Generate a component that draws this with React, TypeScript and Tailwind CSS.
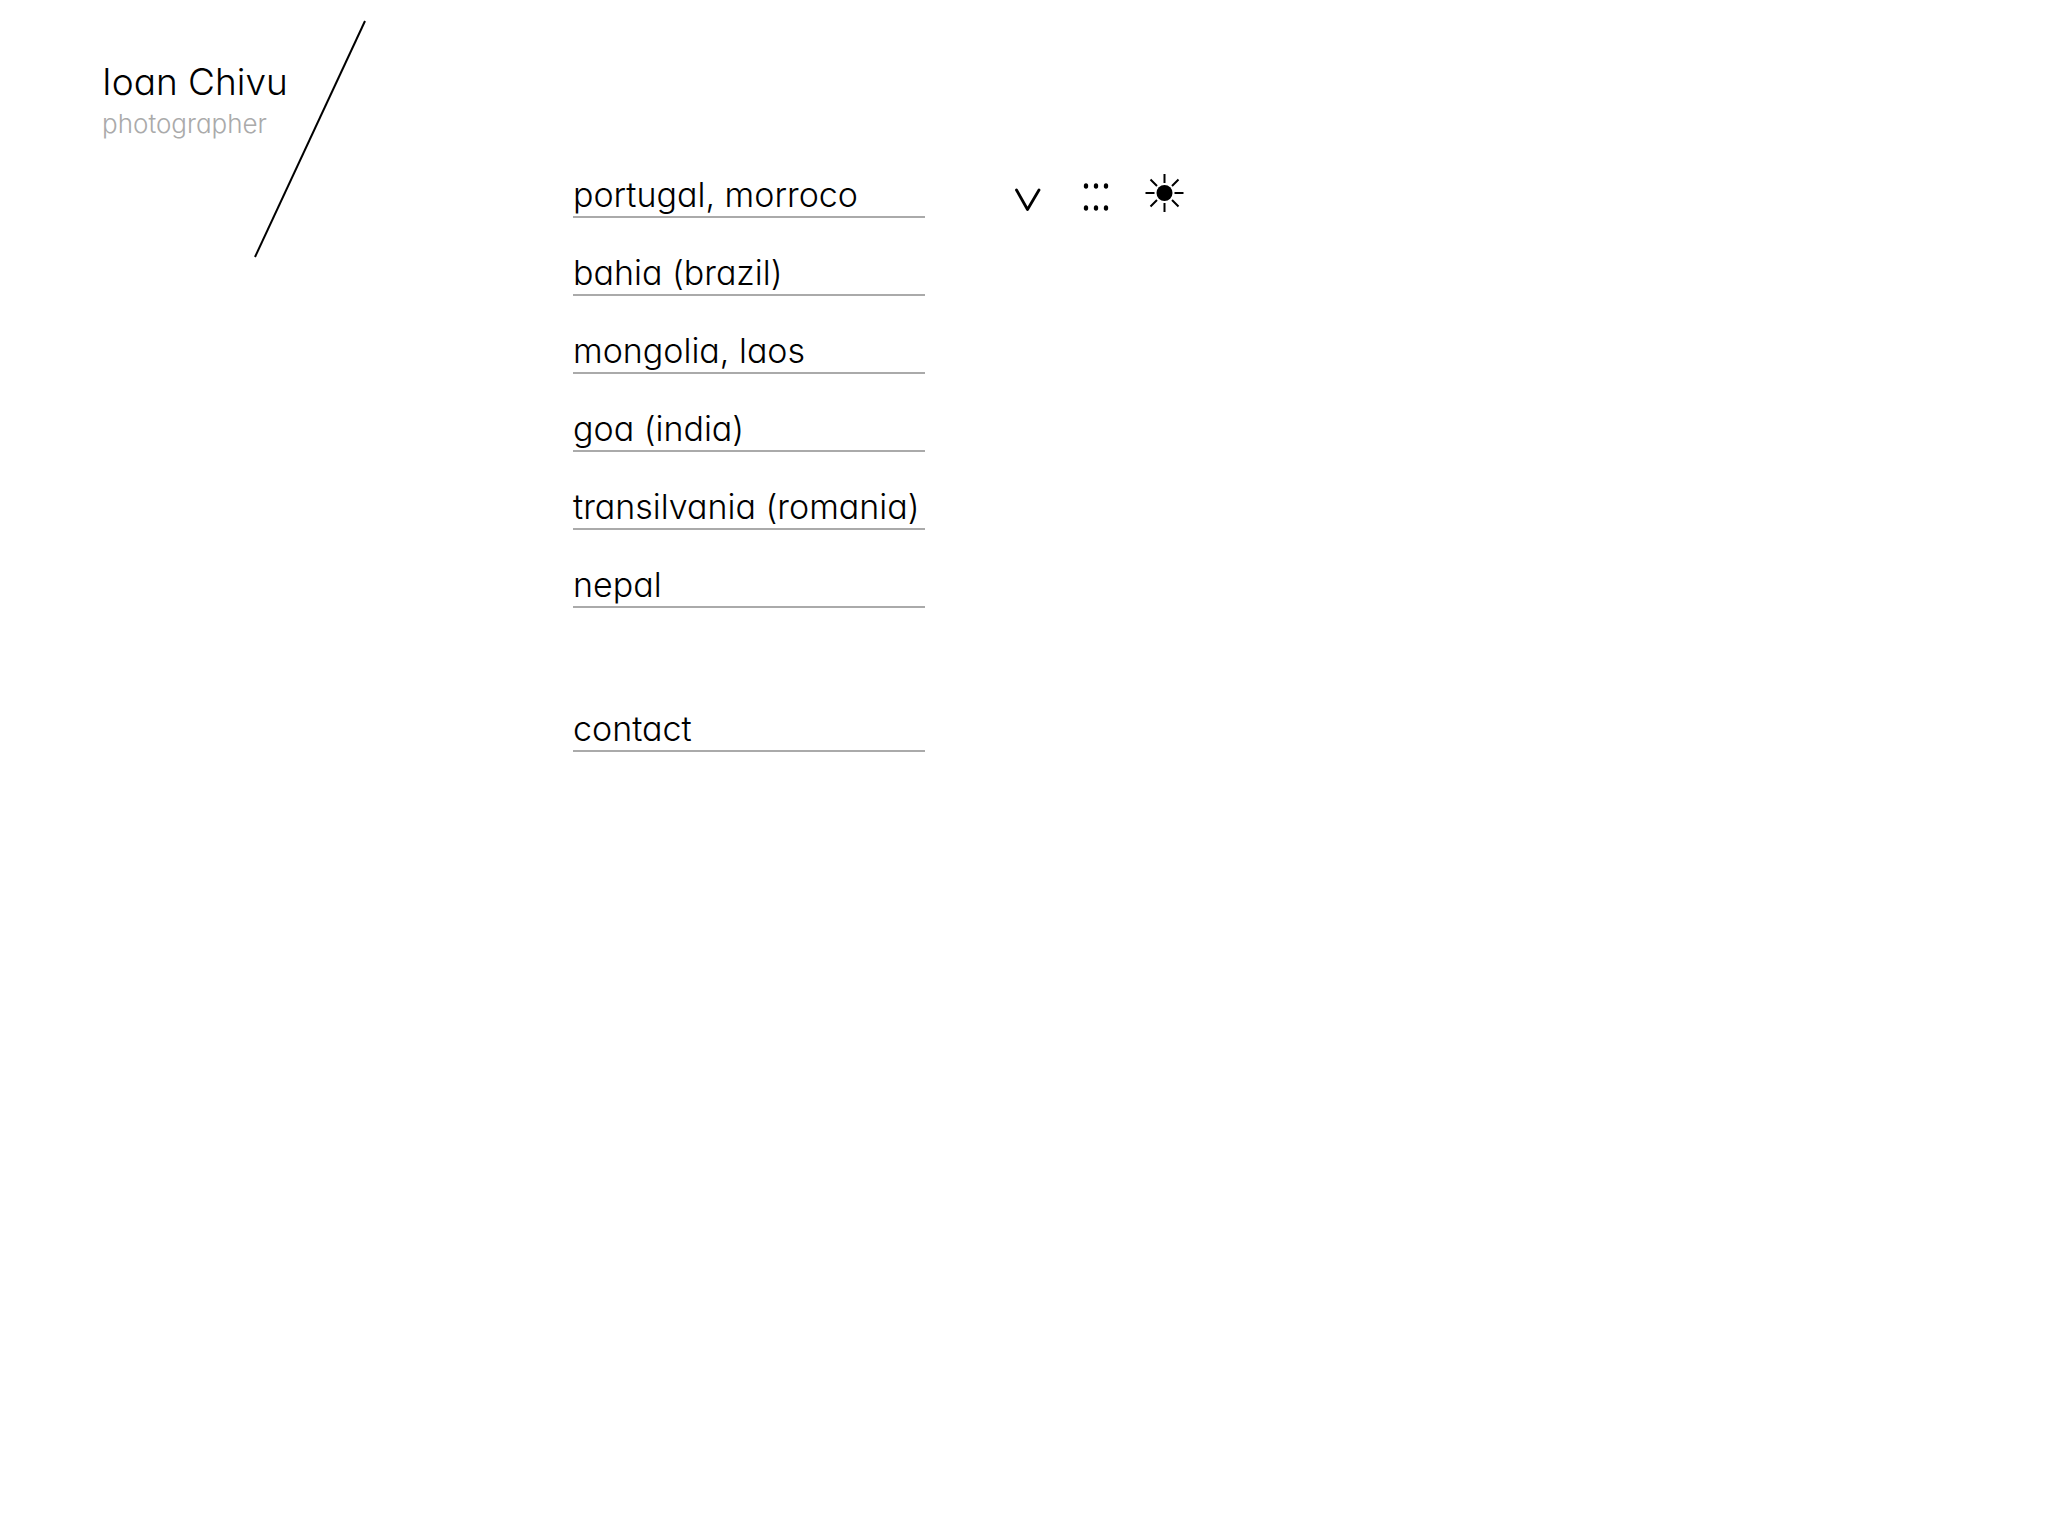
const places = [
  'portugal, morroco',
  'bahia (brazil)',
  'mongolia, laos',
  'goa (india)',
  'transilvania (romania)',
  'nepal',
];

function MenuLink({ label }: { label: string }) {
  return (
    <a
      href={`#${label.split(/[ ,]/)[0]}`}
      className="block h-12 whitespace-nowrap border-b-2 border-[#aaaaaa] pt-1 text-[34px] leading-[42px]"
    >
      {label}
    </a>
  );
}

function Slash() {
  return (
    <svg
      viewBox="0 0 112 238"
      className="absolute left-[152px] -top-9 h-[238px] w-[112px]"
      fill="none"
      stroke="black"
      strokeWidth="2"
      aria-hidden="true"
    >
      <path d="M111 1 1 237" />
    </svg>
  );
}

function SortIcon() {
  return (
    <svg viewBox="0 0 40 40" className="size-10" fill="none" stroke="black" strokeWidth="2.8" strokeLinecap="round" strokeLinejoin="round" aria-hidden="true">
      <path d="M8.500 17 19.500 36.500 31 17" />
    </svg>
  );
}

function GridIcon() {
  return (
    <svg viewBox="0 0 40 40" className="size-10" aria-hidden="true">
      {[13, 35].map((y) =>
        [10, 20, 30].map((x) => <ellipse key={`${x}-${y}`} cx={x} cy={y} rx="2.2" ry="2.7" />),
      )}
    </svg>
  );
}

function SunIcon() {
  return (
    <svg viewBox="0 0 40 40" className="size-10" stroke="black" strokeWidth="2" aria-hidden="true">
      <circle cx="20.500" cy="20" r="8" stroke="none" />
      <path d="M20.500 1v9M20.500 30v9M1.500 20h9M30.500 20h9M6.500 6.500l6.500 6.500M34.500 6.500 28 13M6.500 33.500l6.500-6.500M34.500 33.500 28 27" />
    </svg>
  );
}

export default function App() {
  return (
    <div className="flex min-h-screen flex-wrap bg-white font-['Inter',sans-serif] font-light text-black [font-feature-settings:'cv11']">
      <header className="relative mt-14 ml-[102px] w-[471px]">
        <h1 className="text-[37px] leading-[52px]">Ioan Chivu</h1>
        <p className="text-[26px] leading-8 text-[#aaaaaa]">photographer</p>
        <Slash />
      </header>
      <nav className="mt-[170px] w-[352px]" aria-label="Galleries">
        <ul className="flex flex-col gap-[30px]">
          {places.map((place) => (
            <li key={place}>
              <MenuLink label={place} />
            </li>
          ))}
          <li className="mt-[66px]">
            <MenuLink label="contact" />
          </li>
        </ul>
      </nav>
      <div className="mt-[173px] ml-[83px] flex h-10 gap-7">
        <button type="button" aria-label="Sort">
          <SortIcon />
        </button>
        <button type="button" aria-label="Grid view">
          <GridIcon />
        </button>
        <button type="button" aria-label="Toggle theme">
          <SunIcon />
        </button>
      </div>
    </div>
  );
}
